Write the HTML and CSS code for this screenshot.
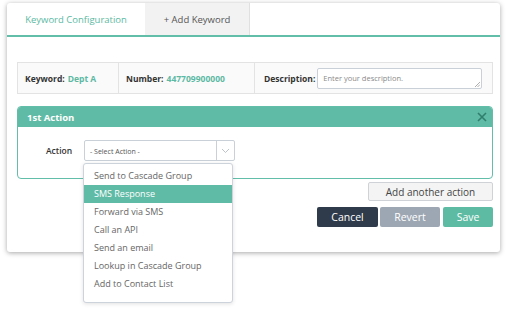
FILE: index.html
```html
<!DOCTYPE html>
<html>
<head>
<meta charset="utf-8">
<link rel="stylesheet" href="styles.css">
</head>
<body>
<div class="card">
  <div class="tabs">
    <div class="tab active">Keyword Configuration</div>
    <div class="tab">+ Add Keyword</div>
  </div>
  <div class="content">
    <div class="info">
      <div class="cell c1"><b>Keyword:</b><span class="val">Dept A</span></div>
      <div class="cell c2"><b>Number:</b><span class="val">447709900000</span></div>
      <div class="cell c3"><b>Description:</b><div class="textarea">Enter your description.<svg class="grip" width="6" height="6" viewBox="0 0 6 6"><path d="M1 6L6 1M3.5 6L6 3.5" stroke="#999" stroke-width="0.8"/></svg></div></div>
    </div>
    <div class="panel">
      <div class="panel-head"><span>1st Action</span>
        <svg class="close" width="10" height="10" viewBox="0 0 10 10"><path d="M1 1L9 9M9 1L1 9" stroke="#2f7f6c" stroke-width="1.6"/></svg>
      </div>
      <div class="panel-body">
        <div class="label">Action</div>
        <div class="select">
          <div class="select-text">- Select Action -</div>
          <div class="select-arrow"><svg width="9" height="6" viewBox="0 0 9 6"><path d="M1 1L4.5 4.5L8 1" fill="none" stroke="#b5bcc4" stroke-width="0.9"/></svg></div>
        </div>
      </div>
    </div>
    <div class="row-add"><div class="btn-add">Add another action</div></div>
    <div class="row-btns">
      <div class="btn cancel">Cancel</div>
      <div class="btn revert">Revert</div>
      <div class="btn save">Save</div>
    </div>
  </div>
  <div class="dropdown">
    <div class="item">Send to Cascade Group</div>
    <div class="item sel">SMS Response</div>
    <div class="item">Forward via SMS</div>
    <div class="item">Call an API</div>
    <div class="item">Send an email</div>
    <div class="item">Lookup in Cascade Group</div>
    <div class="item">Add to Contact List</div>
  </div>
</div>
</body>
</html>
```

FILE: styles.css
```css
* { box-sizing: border-box; }
html, body { min-height: 321px; }
body {
  margin: 0;
  padding: 3px 0 0 7px;
  background: #fff;
  font-family: "Open Sans", "DejaVu Sans", sans-serif;
  color: #333;
}
.card {
  position: relative;
  width: 493px;
  height: 249px;
  background: #fff;
  border-radius: 3px;
  box-shadow: 0 1px 5px rgba(0,0,0,0.35);
}
.tabs {
  display: flex;
  height: 34px;
  border-bottom: 2px solid #62bea9;
}
.tab {
  display: flex;
  align-items: center;
  justify-content: center;
  font-size: 9.5px;
  color: #555;
}
.tab.active {
  width: 138px;
  color: #5cb9a3;
}
.tab:not(.active) {
  width: 105px;
  background: #f2f2f2;
  border-right: 1px solid #e0e0e0;
}
.content {
  padding: 25px 7px 0 10px;
}
.info {
  display: flex;
  height: 32px;
  border: 1px solid #e3e3e3;
  background: #fafafa;
}
.cell {
  display: flex;
  align-items: center;
  font-size: 8.5px;
  color: #333;
  white-space: pre;
}
.cell b { font-weight: 700; }
.val { color: #5cb9a3; font-weight: 700; margin-left: 3px; }
.c1 { width: 101px; padding-left: 7px; border-right: 1px solid #e3e3e3; }
.c2 { width: 136px; padding-left: 7px; border-right: 1px solid #e3e3e3; }
.c3 { flex: 1; padding-left: 9px; }
.textarea {
  position: relative;
  margin-left: 2px;
  width: 165px;
  height: 21px;
  border: 1px solid #c9d0d8;
  border-radius: 2px;
  background: #fff;
  font-size: 7.5px;
  color: #8a8a8a;
  padding: 4px 0 0 5px;
}
.grip { position: absolute; right: 1px; bottom: 1px; }
.panel {
  margin-top: 12px;
  height: 73px;
  border: 1px solid #62bea9;
  border-radius: 4px;
  overflow: hidden;
}
.panel-head {
  height: 20px;
  background: #5fbba6;
  color: #fff;
  font-weight: 700;
  font-size: 9.5px;
  display: flex;
  align-items: center;
  justify-content: space-between;
  padding: 0 5px 0 9px;
}
.panel-body {
  display: flex;
  align-items: center;
  padding: 13px 0 0 28px;
}
.label {
  width: 38px;
  font-size: 8.5px;
  font-weight: 600;
  color: #333;
}
.select {
  display: flex;
  width: 151px;
  height: 21px;
  border: 1px solid #c9d0d8;
  border-radius: 2px;
  background: #fff;
}
.select-text {
  flex: 1;
  font-size: 7px;
  color: #555;
  display: flex;
  align-items: center;
  padding-left: 5px;
  padding-top: 1px;
}
.select-arrow {
  width: 18px;
  border-left: 1px solid #c9d0d8;
  display: flex;
  align-items: center;
  justify-content: center;
}
.row-add {
  display: flex;
  justify-content: flex-end;
  margin-top: 3px;
}
.btn-add {
  width: 125px;
  height: 19px;
  background: #f4f4f4;
  border: 1px solid #cfd3d7;
  border-radius: 2px;
  font-size: 10px;
  color: #444;
  display: flex;
  align-items: center;
  justify-content: center;
}
.row-btns {
  display: flex;
  justify-content: flex-end;
  gap: 2px;
  margin-top: 6px;
}
.btn {
  height: 20px;
  border-radius: 2px;
  color: #fff;
  font-size: 10.5px;
  display: flex;
  align-items: center;
  justify-content: center;
}
.cancel { width: 61px; background: #2f3b4a; }
.revert { width: 60px; background: #9ca7b3; }
.save { width: 50px; background: #5dbba3; margin-left: 1px; }
.dropdown {
  position: absolute;
  left: 76px;
  top: 160px;
  width: 150px;
  height: 140px;
  background: #fff;
  border: 1px solid #cdd3da;
  border-radius: 3px;
  padding-top: 3px;
  box-shadow: 0 1px 4px rgba(0,0,0,0.12);
  z-index: 5;
}
.item {
  height: 18px;
  line-height: 18px;
  padding-left: 10px;
  font-size: 9px;
  color: #666;
}
.item.sel {
  background: #5fbba6;
  color: #fff;
}
```
